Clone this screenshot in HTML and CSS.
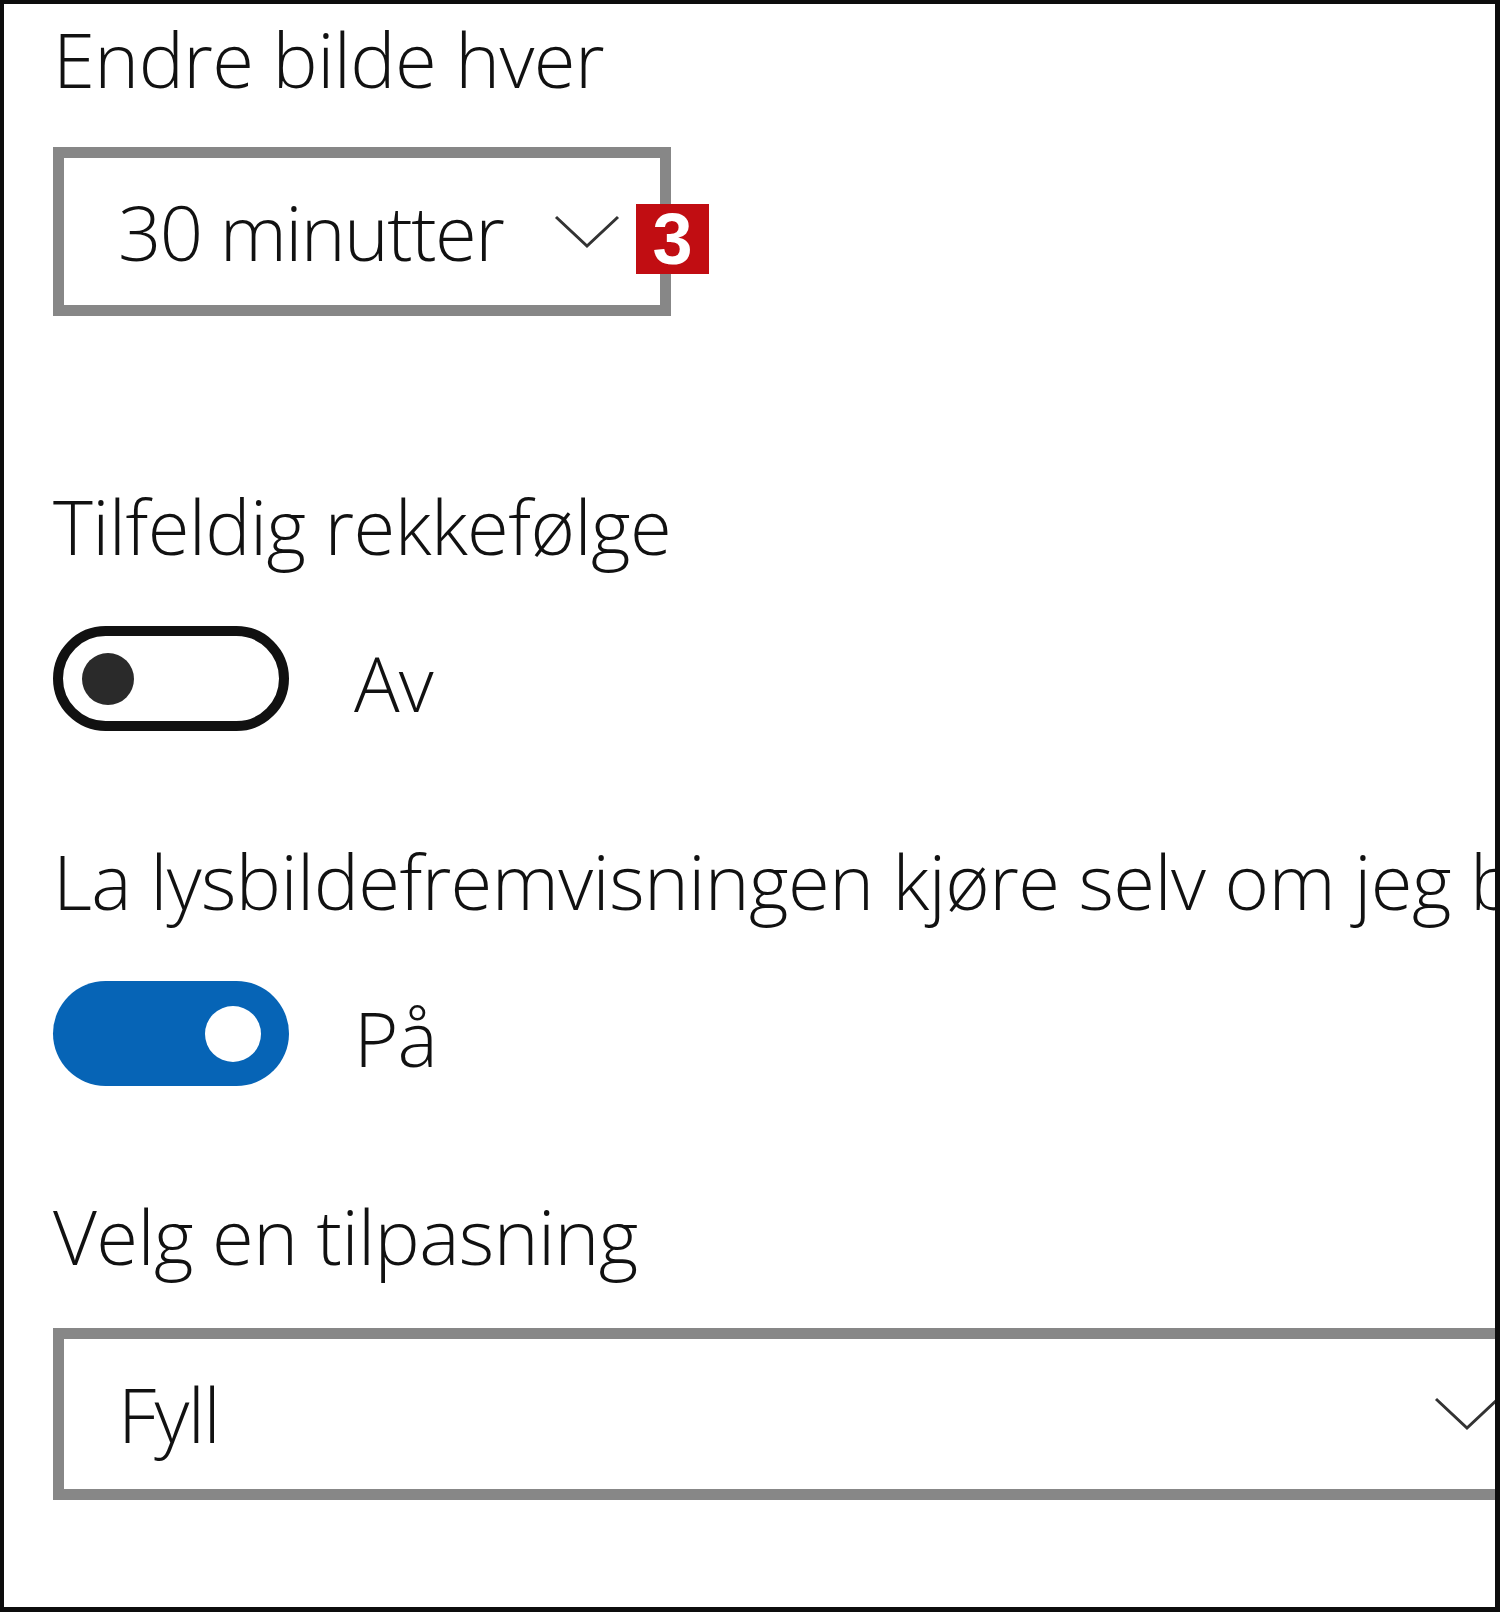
FILE: index.html
```html
<!DOCTYPE html>
<html lang="nb">
<head>
  <meta charset="UTF-8" />
  <title>Bakgrunn – lysbildefremvisning</title>
  <link rel="stylesheet" href="styles.css">
</head>
<body>
  <div class="frame">
    <div class="panel">

      <!-- Interval -->
      <div class="label">Endre bilde hver</div>
      <div class="select-wrap">
        <div class="select select-short">
          <span class="select-value">30 minutter</span>
          <svg class="chevron" viewBox="0 0 66 34" width="66" height="34">
            <path d="M2 2 L33 31 L64 2" />
          </svg>
        </div>
        <span class="badge">3</span>
      </div>

      <!-- Shuffle -->
      <div class="label label-gap">Tilfeldig rekkefølge</div>
      <div class="toggle-row">
        <span class="toggle toggle-off"><span class="thumb"></span></span>
        <span class="toggle-text">Av</span>
      </div>

      <!-- Battery -->
      <div class="label label-gap-sm">La lysbildefremvisningen kjøre selv om jeg bruker batteri</div>
      <div class="toggle-row">
        <span class="toggle toggle-on"><span class="thumb"></span></span>
        <span class="toggle-text">På</span>
      </div>

      <!-- Fit -->
      <div class="label label-gap-sm">Velg en tilpasning</div>
      <div class="select-wrap">
        <div class="select select-wide">
          <span class="select-value">Fyll</span>
          <svg class="chevron" viewBox="0 0 66 34" width="66" height="34">
            <path d="M2 2 L33 31 L64 2" />
          </svg>
        </div>
      </div>

    </div>
  </div>
</body>
</html>
```

FILE: styles.css
```css
* {
  margin: 0;
  padding: 0;
  box-sizing: border-box;
}

html,
body {
  width: 100%;
  height: 100%;
  background: #fff;
  font-family: 'Open Sans', 'Noto Sans', sans-serif;
  font-weight: 350;
  color: #111;
}

/* outer black frame around the screenshot */
.frame {
  width: 1500px;
  height: 1612px;
  border-style: solid;
  border-color: #0d0d0d;
  border-width: 4px 5px 5px 4px;
  overflow: hidden;
  background: #fff;
}

.panel {
  padding: 5px 0 0 49px;
  width: 1700px;
}

/* section headings */
.label {
  font-size: 76px;
  line-height: 100px;
  white-space: nowrap;
  letter-spacing: -0.6px;
}

.label-gap {
  margin-top: 160px;
}

.label-gap-sm {
  margin-top: 98px;
}

/* dropdowns */
.select-wrap {
  position: relative;
  display: inline-block;
  margin-top: 38px;
}

.label-gap-sm + .select-wrap {
  margin-top: 42px;
}

.select {
  display: flex;
  align-items: center;
  justify-content: space-between;
  height: 169px;
  border: 11px solid #878787;
  padding: 0 40px 0 54px;
  background: #fff;
}

.select-short {
  width: 618px;
}

.select-wide {
  width: 1498px;
  height: 172px;
}

.select-value {
  font-size: 76px;
  line-height: 100px;
  letter-spacing: -1.6px;
}

.chevron {
  flex: none;
  fill: none;
  stroke: #333;
  stroke-width: 3;
}

/* red annotation marker */
.badge {
  position: absolute;
  left: 583px;
  top: 57px;
  width: 73px;
  height: 70px;
  background: #c10d12;
  color: #fff;
  font-family: 'Liberation Sans', Arial, sans-serif;
  font-weight: bold;
  font-size: 72px;
  line-height: 70px;
  text-align: center;
}

/* toggles */
.toggle-row {
  display: flex;
  align-items: flex-start;
  margin-top: 50px;
}

.toggle {
  display: flex;
  align-items: center;
  width: 236px;
  height: 105px;
  border-radius: 53px;
  flex: none;
}

.toggle-off {
  border: 10px solid #111;
  padding-left: 19px;
}

.toggle-off .thumb {
  width: 52px;
  height: 52px;
  border-radius: 50%;
  background: #2a2a2a;
}

.toggle-on {
  background: #0664b6;
  justify-content: flex-end;
  padding-right: 28px;
}

.toggle-on .thumb {
  width: 56px;
  height: 56px;
  border-radius: 50%;
  background: #fff;
}

.toggle-text {
  margin: 7px 0 0 65px;
  font-size: 76px;
  line-height: 100px;
  letter-spacing: -1px;
}
```
